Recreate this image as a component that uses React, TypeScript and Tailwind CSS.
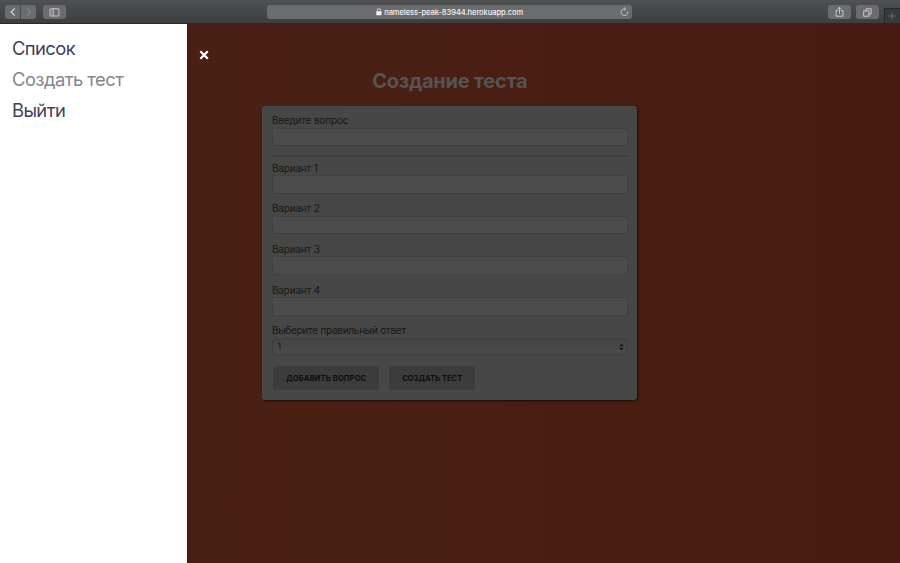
import React from "react";

const options = ["Вариант 1", "Вариант 2", "Вариант 3", "Вариант 4"];

function ToolButton({ className, children }: { className: string; children: React.ReactNode }) {
  return (
    <div className={`flex h-[14px] items-center justify-center bg-[#6b6c6e] text-[#d5d5dc] ${className}`}>
      {children}
    </div>
  );
}

function Toolbar() {
  return (
    <header className="flex h-6 shrink-0 items-start border-b border-[#29292a] bg-linear-to-b from-[#505153] to-[#3d3e40] pl-[5px]">
      <div className="mt-[5px] flex gap-px">
        <ToolButton className="w-[15px] rounded-l-[3px]">
          <svg width="6" height="10" viewBox="0 0 6 10" fill="none" stroke="currentColor" strokeWidth="1.2"><path d="M4.7 1.4 1.2 5l3.5 3.6" /></svg>
        </ToolButton>
        <ToolButton className="w-[15px] rounded-r-[3px]">
          <svg width="6" height="10" viewBox="0 0 6 10" fill="none" stroke="#929397" strokeWidth="1"><path d="M1.3 1.4 4.8 5 1.3 8.6" /></svg>
        </ToolButton>
      </div>
      <ToolButton className="mt-[5px] ml-[7px] w-[23px] rounded-[3px]">
        <svg width="11" height="9" viewBox="0 0 11 9" fill="none" stroke="currentColor" strokeWidth="0.9"><rect x="1" y=".8" width="9" height="7.2" rx=".6" /><path d="M4.2 1v6.8" /><path d="M2 2.8h1.2M2 4.3h1.2M2 5.8h1.2" strokeWidth=".4" /></svg>
      </ToolButton>
      <div className="mt-[5px] ml-[201.4px] flex h-[14px] w-[364.6px] items-center rounded-[3px] bg-[#6b6c6e] pr-[3px] pl-[108.8px] text-[#f3f3f5]">
        <svg width="6" height="8" viewBox="0 0 6 8"><rect x=".3" y="3.3" width="5.2" height="4" rx=".5" fill="currentColor" /><path d="M1.3 3.5V2.3a1.6 1.6 0 0 1 3.2 0v1.2" fill="none" stroke="currentColor" strokeWidth=".8" /></svg>
        <span className="ml-[2px] pt-[1.5px] text-[7.6px] leading-[14px] font-medium tracking-[-0.1px] whitespace-nowrap">nameless-peak-83944.herokuapp.com</span>
        <svg className="ml-auto text-[#cfcfd4]" width="9" height="10" viewBox="0 0 9 10" fill="none" stroke="currentColor" strokeWidth=".9"><path d="M7.6 4.5A3.3 3.3 0 1 1 4.5 2h.8M4.2.5 5.8 2 4.2 3.6" /></svg>
      </div>
      <ToolButton className="mt-[5px] ml-[196px] w-[23px] rounded-[3px]">
        <svg width="9" height="12" viewBox="0 0 9 12" fill="none" stroke="currentColor" strokeWidth=".9"><path d="M3 4.5H1v5.7h7V4.5H6M4.5 7.5V1.3M2.7 3l1.8-1.8L6.3 3" /></svg>
      </ToolButton>
      <ToolButton className="mt-[5px] ml-[5px] w-[23px] rounded-[3px]">
        <svg width="9" height="9" viewBox="0 0 9 9" fill="none" stroke="currentColor" strokeWidth=".9"><path d="M3 3V.8h5.2V6H6" /><rect x=".7" y="3" width="5.2" height="5.2" /></svg>
      </ToolButton>
      <div className="mt-[8px] ml-[5px] flex h-[15px] flex-1 items-center justify-center border-t border-l border-[#292a2b] bg-[#38393a]">
        <svg width="8" height="8" viewBox="0 0 8 8" stroke="#77787a" strokeWidth=".8"><path d="M.5 4h7M4 .5v7" /></svg>
      </div>
    </header>
  );
}

function Field({ label }: { label: string }) {
  return (
    <label className="block">
      <span className="block h-[13.3px] text-[10px] leading-[13.4px] tracking-[-0.17px]">{label}</span>
      <span className="block h-[18.7px] border border-[#414141] bg-[#4c4c4c]" />
    </label>
  );
}

export default function App() {
  return (
    <div className="flex h-[563px] w-[900px] flex-col overflow-hidden font-['Inter','Liberation_Sans',sans-serif]">
      <Toolbar />
      <div className="flex min-h-0 flex-1">
        <nav className="flex w-[187px] shrink-0 flex-col bg-white pt-[8.5px] pl-[12px] text-[18.4px] leading-[31.2px] text-[#414157]">
          <span className="tracking-[-0.6px]">Список</span>
          <span className="tracking-[-0.55px] text-[#85858c]">Создать тест</span>
          <span className="tracking-[-0.6px]">Выйти</span>
        </nav>
        <main className="flex flex-1 items-start border-l border-[#3b1a10] bg-linear-to-r from-[#492114] to-[#481b11]">
          <svg className="mt-[26px] ml-[11px] shrink-0" width="10" height="10" viewBox="0 0 10 10" stroke="white" strokeWidth="2.2"><path d="m1.4 1.3 7.4 7.4M8.8 1.3 1.4 8.7" /></svg>
          <div className="ml-[53.4px] w-[375px]">
            <h1 className="mt-[43px] h-[38.8px] text-center text-[20px] leading-[29px] font-bold tracking-[-0.27px] text-[#535453]">Создание теста</h1>
            <form className="h-[294.5px] rounded-[3px] bg-[#474747] px-[9.5px] pt-[8.7px] text-[#171717] shadow-[1px_1px_2px_#1c0d08]">
              <Field label="Введите вопрос" />
              <hr className="mt-[8.5px] mb-[4.6px] h-[2px] border-0 bg-[#3d3d3d]" />
              <div className="flex flex-col gap-[8.7px]">
                {options.map((o) => <Field key={o} label={o} />)}
              </div>
              <label className="mt-[8.5px] block">
                <span className="block h-[14px] text-[10px] leading-[13px] tracking-[-0.26px]">Выберите правильный ответ</span>
                <span className="flex h-[18px] items-center justify-between rounded-[3px] border border-[#404040] bg-linear-to-b from-[#444] to-[#4b4b4b] pr-[3px] pl-[5px] text-[7px] shadow-[inset_0_0_2px_#3b3b3b]">
                  <span className="pt-px font-medium text-[#0c0c0c]">1</span>
                  <svg width="5" height="8" viewBox="0 0 5 8" fill="#111"><path d="M.5 3.3 2.5.8l2 2.5ZM.5 4.7l2 2.5 2-2.5Z" /></svg>
                </span>
              </label>
              <div className="mt-[10.3px] ml-[1.3px] flex gap-[10px] text-[7.5px] leading-none font-bold text-[#0d0d0d]">
                <button type="button" className="h-6 w-[106px] rounded-[2px] bg-[#3c3c3c] pt-px tracking-[0.17px] whitespace-nowrap">ДОБАВИТЬ ВОПРОС</button>
                <button type="button" className="h-6 w-[86px] rounded-[2px] bg-[#3c3c3c] pt-px tracking-[0.05px] whitespace-nowrap">СОЗДАТЬ ТЕСТ</button>
              </div>
            </form>
          </div>
        </main>
      </div>
    </div>
  );
}
